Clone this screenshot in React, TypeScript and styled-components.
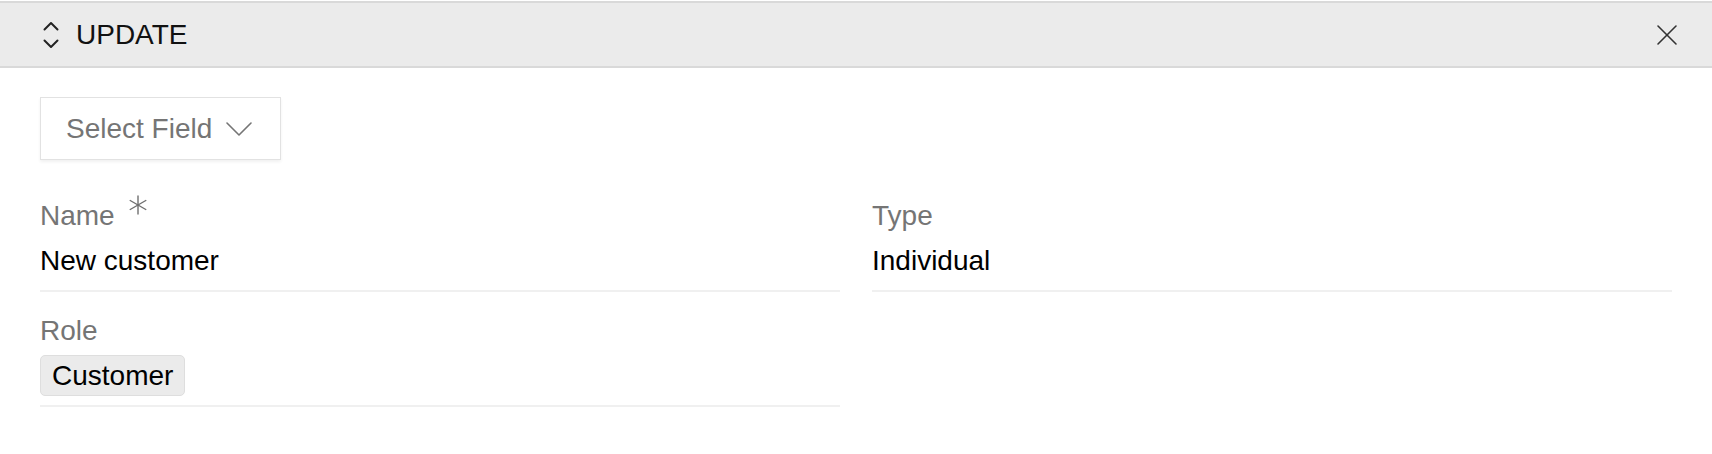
import React from "react";
import styled, { createGlobalStyle } from "styled-components";

const Global = createGlobalStyle`
  html, body { margin: 0; padding: 0; background: #ffffff; }
  body { font-family: "Liberation Sans", Arial, Helvetica, sans-serif; }
  * { box-sizing: border-box; }
`;

const Panel = styled.div`
  width: 1712px;
  padding-top: 1px;
  background: #ffffff;
`;

const Header = styled.div`
  height: 67px;
  display: flex;
  align-items: center;
  padding: 0 34px 0 43px;
  background: #ebebeb;
  border-top: 2px solid #d9d9d9;
  border-bottom: 2px solid #d9d9d9;
`;

const Title = styled.div`
  margin-left: 17px;
  font-size: 28px;
  line-height: 32px;
  color: #111111;
  flex: 1;
`;

const IconButton = styled.button`
  border: none;
  background: none;
  padding: 0;
  display: flex;
  align-items: center;
  justify-content: center;
  cursor: pointer;
`;

const Body = styled.div`
  padding: 29px 40px 0 40px;
`;

const SelectButton = styled.button`
  height: 63px;
  width: 241px;
  display: flex;
  align-items: center;
  gap: 14px;
  padding: 0 0 0 25px;
  background: #ffffff;
  border: 1px solid #e2e2e2;
  box-shadow: 0 2px 3px rgba(0, 0, 0, 0.06);
  font-family: "Liberation Sans", Arial, Helvetica, sans-serif;
  font-size: 28px;
  color: #757575;
  cursor: pointer;
`;

const Grid = styled.div`
  margin-top: 40px;
  display: grid;
  grid-template-columns: 800px 800px;
  column-gap: 32px;
  row-gap: 23px;
`;

const Field = styled.div`
  display: flex;
  flex-direction: column;
  border-bottom: 2px solid #f0f0f0;
  padding-bottom: 9px;
`;

const Label = styled.div`
  display: flex;
  align-items: flex-start;
  gap: 13px;
  font-size: 28px;
  line-height: 32px;
  color: #757575;
`;

const Required = styled.span`
  display: inline-flex;
  margin-top: -5px;
`;

const Value = styled.div`
  margin-top: 8px;
  min-height: 41px;
  display: flex;
  align-items: center;
  font-size: 28px;
  line-height: 32px;
  color: #000000;
`;

const Chip = styled.span`
  display: inline-flex;
  align-items: center;
  height: 41px;
  padding: 0 11px;
  background: #ebebeb;
  border: 1px solid #dedede;
  border-radius: 5px;
  font-size: 28px;
  color: #000000;
`;

const Chevrons = () => (
  <svg width="16" height="28" viewBox="0 0 16 28" fill="none" stroke="#222" strokeWidth="2" strokeLinecap="round" strokeLinejoin="round">
    <polyline points="1.5,8.5 8,2 14.5,8.5" />
    <polyline points="1.5,19.5 8,26 14.5,19.5" />
  </svg>
);

const CloseIcon = () => (
  <svg width="22" height="22" viewBox="0 0 22 22" fill="none" stroke="#333" strokeWidth="1.6" strokeLinecap="round">
    <line x1="2" y1="2" x2="20" y2="20" />
    <line x1="20" y1="2" x2="2" y2="20" />
  </svg>
);

const ChevronDown = () => (
  <svg width="26" height="14" viewBox="0 0 26 14" fill="none" stroke="#757575" strokeWidth="1.6" strokeLinecap="round" strokeLinejoin="round">
    <polyline points="1,1 13,13 25,1" />
  </svg>
);

const Asterisk = () => (
  <svg width="20" height="20" viewBox="0 0 20 20" fill="none" stroke="#6f6f6f" strokeWidth="1.4" strokeLinecap="round">
    <line x1="10" y1="1" x2="10" y2="19" />
    <line x1="2.2" y1="5.5" x2="17.8" y2="14.5" />
    <line x1="17.8" y1="5.5" x2="2.2" y2="14.5" />
  </svg>
);

export default function App() {
  return (
    <>
      <Global />
      <Panel>
        <Header>
          <Chevrons />
          <Title>UPDATE</Title>
          <IconButton aria-label="close">
            <CloseIcon />
          </IconButton>
        </Header>
        <Body>
          <SelectButton>
            Select Field
            <ChevronDown />
          </SelectButton>
          <Grid>
            <Field>
              <Label>
                Name
                <Required>
                  <Asterisk />
                </Required>
              </Label>
              <Value>New customer</Value>
            </Field>
            <Field>
              <Label>Type</Label>
              <Value>Individual</Value>
            </Field>
            <Field>
              <Label>Role</Label>
              <Value>
                <Chip>Customer</Chip>
              </Value>
            </Field>
          </Grid>
        </Body>
      </Panel>
    </>
  );
}
